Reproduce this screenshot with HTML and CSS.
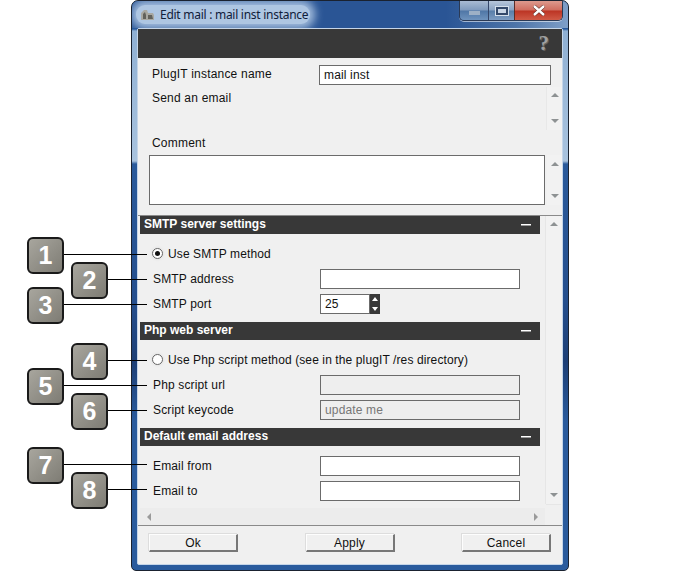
FILE: index.html
```html
<!DOCTYPE html>
<html lang="en">
<head>
<meta charset="utf-8">
<title>Edit mail</title>
<link rel="stylesheet" href="styles.css">
</head>
<body>
<div class="stage">
  <div class="window">
    <div class="titlebar">
      <div class="title-glow">
        <svg class="app-icon" width="15" height="12" viewBox="0 0 15 12"><path d="M1 11V4l3-3h3l1 3h5l1 2v5z" fill="#a8a8a2"/><path d="M3 10V5l2-2 1 3v4zM8 6h4l1 4H8z" fill="#62625c"/></svg>
        <span class="title-text">Edit mail : mail inst instance</span>
      </div>
      <div class="controls">
        <div class="ctl ctl-min"><span class="min-glyph"></span></div>
        <div class="ctl ctl-max"><span class="max-glyph"></span></div>
        <div class="ctl ctl-close"><svg width="14" height="11" viewBox="0 0 14 11"><path d="M2 1l10 9M12 1L2 10" stroke="#5a2a22" stroke-width="3.6" fill="none"/><path d="M2 1l10 9M12 1L2 10" stroke="#fff" stroke-width="2.4" fill="none"/></svg></div>
      </div>
    </div>
    <div class="panel">
      <div class="darkbar"><span class="help">?</span></div>
      <div class="top">
        <div class="name-row">
          <span class="name-label">PlugIT instance name</span>
          <div class="field name-field">mail inst</div>
        </div>
        <div class="desc-row">
          <span class="desc-text">Send an email</span>
          <div class="vscroll vscroll-desc"><span class="arr arr-up"></span><span class="arr arr-down"></span></div>
        </div>
        <div class="comment-label">Comment</div>
        <div class="comment-row">
          <div class="field comment-field"></div>
          <div class="vscroll vscroll-comment"><span class="arr arr-up"></span><span class="arr arr-down"></span></div>
        </div>
      </div>
      <div class="pane">
        <div class="pane-main">
          <div class="pane-content">
            <div class="head"><span>SMTP server settings</span><span class="dash"></span></div>
            <div class="rows rows-first">
              <div class="row"><span class="radio on"></span><span class="radio-label">Use SMTP method</span></div>
              <div class="row"><span class="label">SMTP address</span><div class="field wide"></div></div>
              <div class="row"><span class="label">SMTP port</span><div class="field port">25</div><div class="spin"><span class="arr-w arr-up-w"></span><span class="arr-w arr-down-w"></span></div></div>
            </div>
            <div class="head"><span>Php web server</span><span class="dash"></span></div>
            <div class="rows">
              <div class="row"><span class="radio"></span><span class="radio-label">Use Php script method (see in the plugIT /res directory)</span></div>
              <div class="row"><span class="label">Php script url</span><div class="field wide off"></div></div>
              <div class="row"><span class="label">Script keycode</span><div class="field wide off">update me</div></div>
            </div>
            <div class="head"><span>Default email address</span><span class="dash"></span></div>
            <div class="rows">
              <div class="row"><span class="label">Email from</span><div class="field wide"></div></div>
              <div class="row"><span class="label">Email to</span><div class="field wide"></div></div>
            </div>
          </div>
          <div class="vscroll vscroll-pane"><span class="arr arr-up"></span><span class="arr arr-down"></span></div>
        </div>
        <div class="hscroll"><span class="arr arr-left"></span><span class="arr arr-right"></span></div>
      </div>
      <div class="footer">
        <div class="btn">Ok</div>
        <div class="btn">Apply</div>
        <div class="btn">Cancel</div>
      </div>
    </div>
  </div>

  <div class="callout p1"><div class="num">1</div><div class="lead l1"></div></div>
  <div class="callout p2"><div class="num">2</div><div class="lead l2"></div></div>
  <div class="callout p3"><div class="num">3</div><div class="lead l1"></div></div>
  <div class="callout p4"><div class="num">4</div><div class="lead l2"></div></div>
  <div class="callout p5"><div class="num">5</div><div class="lead l1"></div></div>
  <div class="callout p6"><div class="num">6</div><div class="lead l2"></div></div>
  <div class="callout p7"><div class="num">7</div><div class="lead l1"></div></div>
  <div class="callout p8"><div class="num">8</div><div class="lead l2"></div></div>
</div>
</body>
</html>
```
FILE: styles.css
```css
* { box-sizing: border-box; }
html, body { margin: 0; padding: 0; background: #fff; }
body { font-family: "Liberation Sans", Arial, sans-serif; font-size: 12px; color: #111; }
.stage { position: relative; width: 700px; height: 572px; overflow: hidden; }

.window {
  margin-left: 131px; width: 438px; height: 571px;
  border: 1px solid #1a2230; border-radius: 7px 7px 5px 5px;
  background: linear-gradient(180deg, #1f4a85 0, #2a5a9c 28px, #8fb0d4 30px, #a9c3de 160px, #2a5a9b 163px, #254f8e 300px, #1d3f76 360px, #2a5b9d 420px, #2a5b9d 100%);
  display: flex; flex-direction: column; padding: 0 5px 5px;
}
.titlebar { height: 27px; margin: 0 -5px; display: flex; justify-content: space-between; overflow: hidden; background: linear-gradient(90deg, #2a5595 0, #2a5595 72%, #4d74a8 88%, #7f9fc8 100%); border-radius: 6px 6px 0 0; }
.title-glow { display: flex; align-items: center; gap: 5px; height: 19px; margin: 4px 0 4px 4px; padding: 0 2px 0 4px; background: #aec6e2; border-radius: 9px; box-shadow: 0 0 9px 5px #a3bddd; }
.app-icon { flex: none; }
.title-text { font-family: "Noto Sans", sans-serif; font-size: 12px; letter-spacing: -0.27px; color: #10203a; white-space: nowrap; }
.controls { display: flex; margin-right: 5px; height: 20px; border: 1px solid #2b3a55; border-top: 0; border-radius: 0 0 5px 5px; overflow: hidden; box-shadow: 0 1px 0 rgba(255,255,255,0.55); }
.ctl { display: flex; align-items: center; justify-content: center; }
.ctl-min { width: 29px; background: linear-gradient(180deg, #a9bbd3 0, #7f9abd 48%, #4f76a6 52%, #6f93bd 100%); border-right: 1px solid #34466a; }
.ctl-max { width: 26px; background: linear-gradient(180deg, #b6c6db 0, #8aa3c3 48%, #587ea9 52%, #7d9cc2 100%); border-right: 1px solid #5b2d28; }
.ctl-close { width: 47px; background: linear-gradient(180deg, #dd9a8e 0, #cf6d5f 48%, #bc3424 52%, #d05a46 100%); }
.min-glyph { width: 11px; height: 4px; margin-top: 4px; background: #9db0c6; }
.max-glyph { width: 12px; height: 8px; border: 2px solid #33496b; background: #c9d6e6; box-shadow: 0 0 0 1px #d5e0ec; }

.panel { flex: 1; min-height: 0; background: #f0f0f0; border: 1px solid #c5d5e8; border-radius: 2px; display: flex; flex-direction: column; }
.darkbar { height: 29px; background: #383838; display: flex; justify-content: flex-end; align-items: center; padding-right: 13px; flex: none; }
.help { font-family: "Liberation Serif", serif; font-weight: bold; font-size: 21px; color: #a0a0a0; text-shadow: 1px 1px 0 #606060; }

.top { height: 158px; flex: none; border-bottom: 1px solid #8a8a8a; }
.name-row { display: flex; align-items: center; padding: 7px 0 0 14px; height: 27px; }
.name-label { width: 167px; letter-spacing: 0.2px; margin-top: -3px; }
.field { background: #fff; border: 1px solid #6b6b6b; height: 20px; line-height: 18px; padding-left: 4px; letter-spacing: 0.15px; flex: none; }
.name-field { width: 232px; }
.desc-row { height: 46px; display: flex; justify-content: space-between; padding-left: 14px; }
.desc-text { letter-spacing: 0.2px; padding-top: 6px; }
.vscroll { width: 15px; background: #f2f2f2; display: flex; flex-direction: column; justify-content: space-between; align-items: center; flex: none; }
.vscroll-desc { height: 43px; margin-top: 2px; padding: 6px 0 7px; box-shadow: -1px 0 0 #e8e8e8; }
.comment-label { height: 20px; padding: 5px 0 0 14px; letter-spacing: 0.2px; }
.comment-row { display: flex; justify-content: space-between; padding-left: 11px; }
.comment-field { width: 396px; height: 50px; margin-top: 4px; }
.vscroll-comment { height: 50px; margin-top: 4px; padding: 7px 0 7px; }

.arr { width: 0; height: 0; display: block; border: 4px solid transparent; }
.arr-up { border-top: 0; border-bottom: 4px solid #8e9293; }
.arr-down { border-bottom: 0; border-top: 4px solid #8e9293; }
.arr-left { border-left: 0; border-right: 4px solid #9a9a9a; }
.arr-right { border-right: 0; border-left: 4px solid #9a9a9a; }

.pane { height: 309px; flex: none; display: flex; flex-direction: column; }
.pane-main { height: 292px; display: flex; flex: none; padding-left: 2px; }
.pane-content { width: 406px; flex: none; }
.vscroll-pane { height: 288px; padding: 6px 0 7px; box-shadow: -1px 0 0 #e6e6e6, 0 1px 0 #e6e6e6; }
.head { height: 18px; width: 400px; background: #383838; color: #fff; font-weight: bold; padding: 0 9px 2px 4px; display: flex; justify-content: space-between; align-items: center; }
.dash { width: 10px; height: 1px; background: #fff; box-shadow: 0 1px 0 #999; }
.rows { height: 88px; padding-top: 7px; }
.rows:last-child { height: 60px; padding-top: 7px; }
.row { height: 25px; display: flex; align-items: center; padding-left: 13px; }
.label { width: 167px; letter-spacing: 0.15px; flex: none; }
.radio { width: 11px; height: 11px; border-radius: 50%; background: #fff; border: 1px solid #666; box-shadow: 0 0 2px 1px #e4e4e4; flex: none; margin-left: -1px; display: flex; align-items: center; justify-content: center; }
.radio.on::after { content: ""; width: 5px; height: 5px; border-radius: 50%; background: #111; }
.radio-label { margin-left: 5px; letter-spacing: 0.11px; white-space: nowrap; }
.wide { width: 200px; }
.off { background: #eeeeee; color: #777; }
.port { width: 50px; }
.spin { width: 10px; height: 20px; background: #383838; display: flex; flex-direction: column; justify-content: space-between; align-items: center; padding: 3px 0; }
.arr-w { display: block; width: 0; height: 0; border: 3px solid transparent; border-width: 0 3.5px; }
.arr-up-w { border-bottom: 4px solid #fff; }
.arr-down-w { border-top: 4px solid #fff; }

.hscroll { height: 17px; width: 405px; margin-left: 2px; background: #ececec; display: flex; justify-content: space-between; align-items: center; padding: 0 7px; flex: none; }

.footer { flex: 1; border-top: 1px solid #8a8a8a; display: flex; justify-content: space-between; padding: 8px 11px 0 11px; }
.btn { width: 89px; height: 18px; background: #f0f0f0; border: 1px solid; border-color: #fdfdfd #777 #777 #fdfdfd; border-right-width: 2px; border-bottom-width: 2px; text-align: center; line-height: 16px; letter-spacing: 0.2px; box-shadow: -1px -1px 0 #ddd; }

.callout { position: absolute; width: 123px; height: 37px; }
.p1 { left: 27px; top: 237px; }
.p2 { left: 71px; top: 262px; width: 79px; }
.p3 { left: 27px; top: 287px; }
.p4 { left: 71px; top: 343px; width: 79px; }
.p5 { left: 27px; top: 368px; }
.p6 { left: 71px; top: 393px; width: 79px; }
.p7 { left: 27px; top: 447px; }
.p8 { left: 71px; top: 472px; width: 79px; }
.num { width: 37px; height: 37px; background: linear-gradient(135deg, #a8a69e 0, #7e7c74 100%); border: 2px solid #1a1a1a; border-radius: 6px; color: #fff; font-weight: bold; font-size: 25px; line-height: 33px; text-align: center; }
.lead { position: absolute; top: 17px; height: 1px; background: #000; }
.l1 { left: 37px; width: 83px; }
.l2 { left: 37px; width: 39px; }
```
